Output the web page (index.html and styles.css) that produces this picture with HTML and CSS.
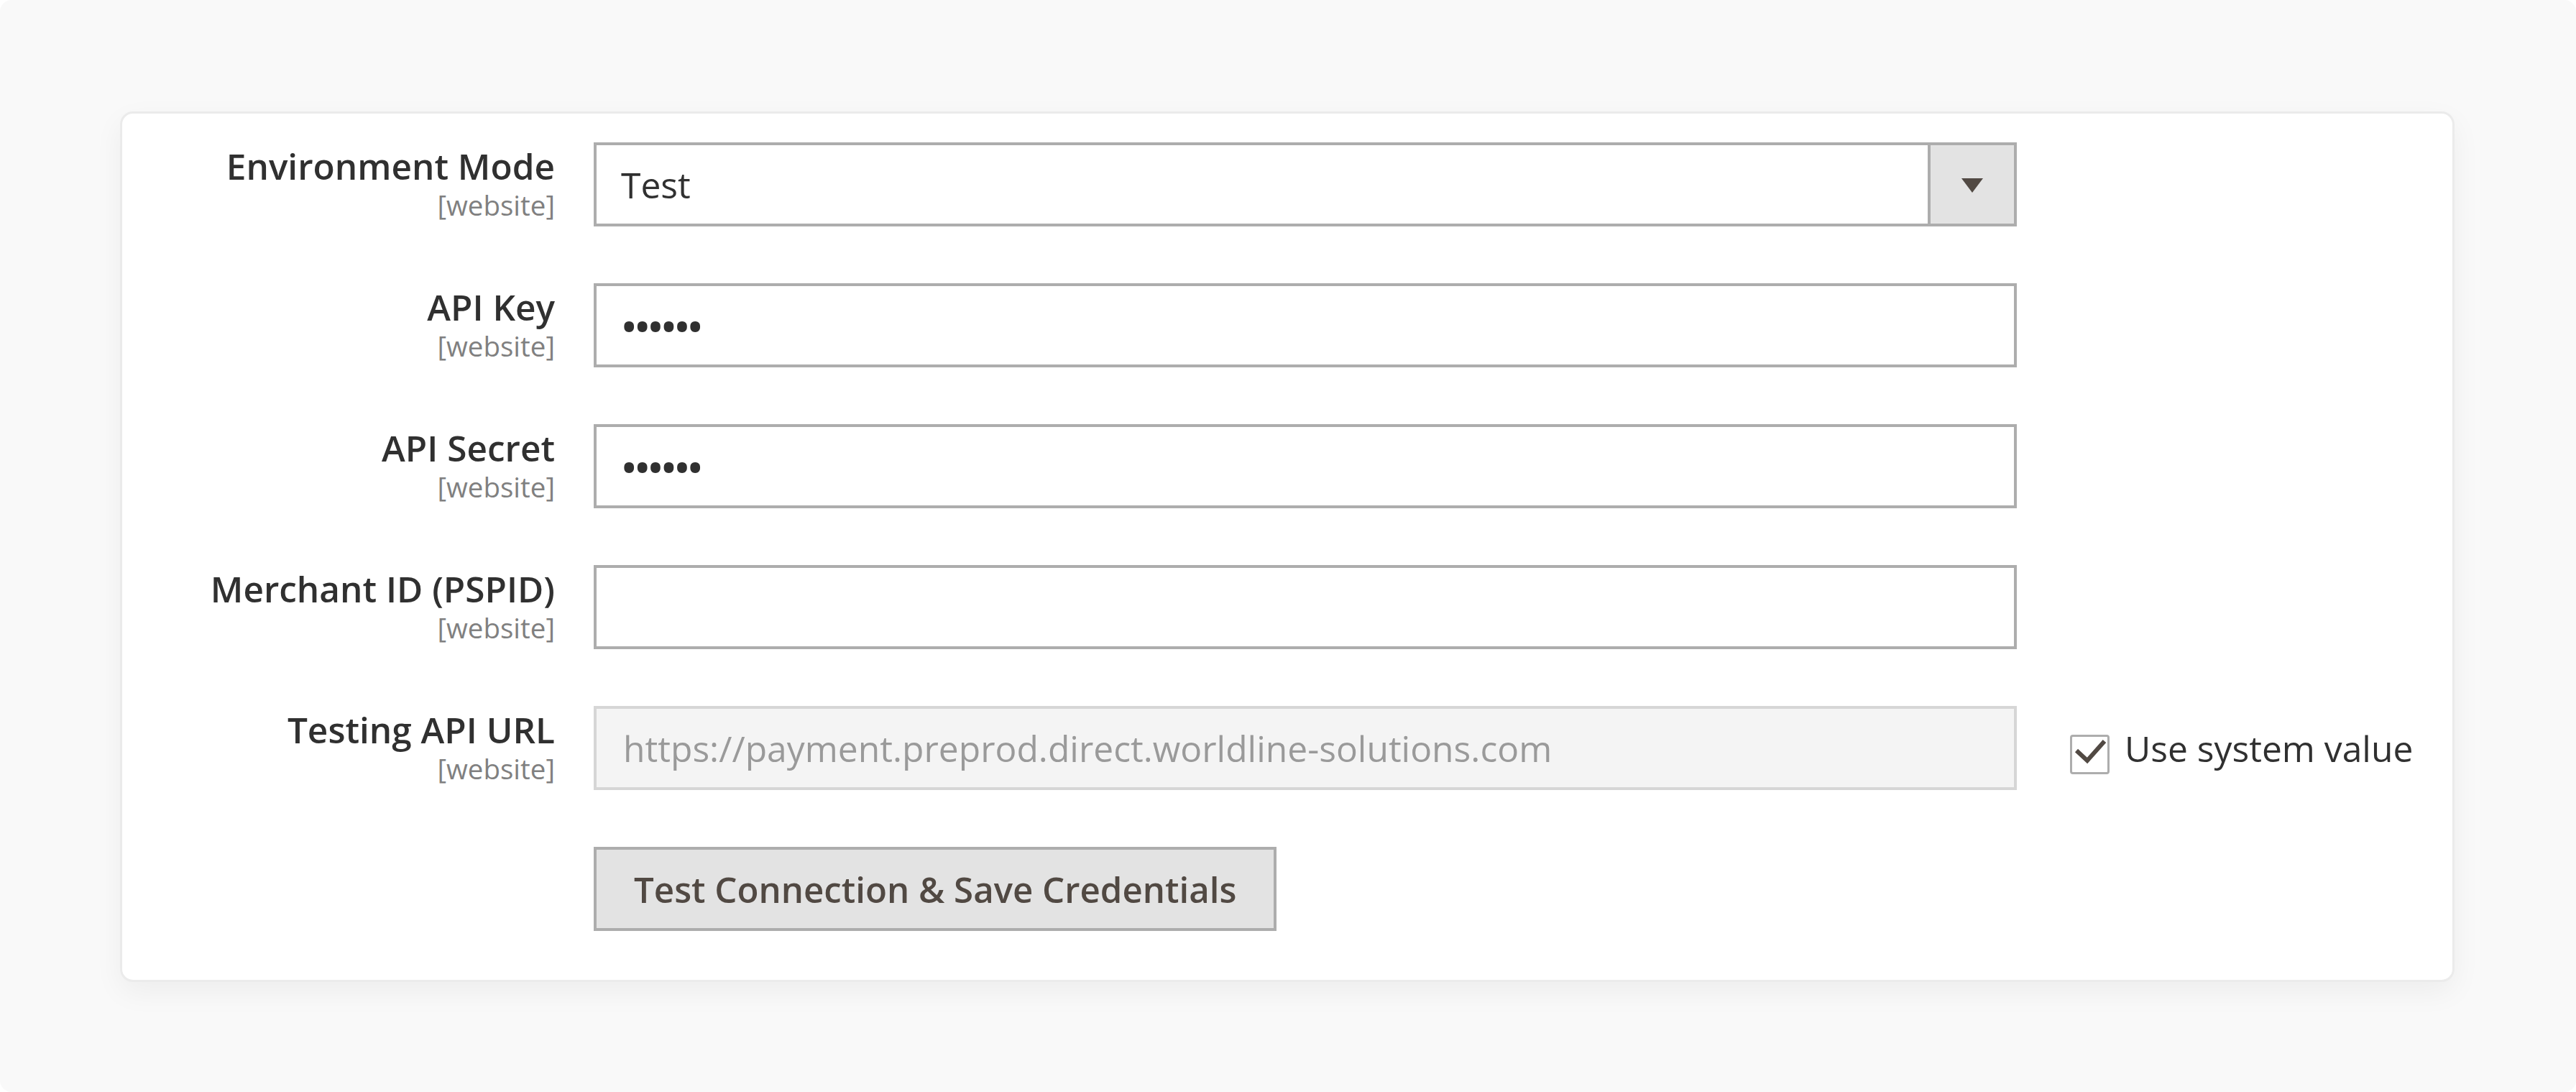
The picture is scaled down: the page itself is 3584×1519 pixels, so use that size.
FILE: index.html
```html
<!DOCTYPE html>
<html lang="en">
<head>
<meta charset="utf-8">
<title>Worldline configuration</title>
<link rel="stylesheet" href="styles.css">
</head>
<body>
<div class="page">
  <section class="card">
    <div class="row">
      <div class="label"><span class="label-text">Environment Mode</span><span class="scope">[website]</span></div>
      <div class="control">
        <div class="select">
          <span class="select-value">Test</span>
          <span class="select-arrow"><span class="triangle"></span></span>
        </div>
      </div>
      <div class="extra"></div>
    </div>

    <div class="row">
      <div class="label"><span class="label-text">API Key</span><span class="scope">[website]</span></div>
      <div class="control">
        <div class="input"><span class="dots">&#8226;&#8226;&#8226;&#8226;&#8226;&#8226;</span></div>
      </div>
      <div class="extra"></div>
    </div>

    <div class="row">
      <div class="label"><span class="label-text">API Secret</span><span class="scope">[website]</span></div>
      <div class="control">
        <div class="input"><span class="dots">&#8226;&#8226;&#8226;&#8226;&#8226;&#8226;</span></div>
      </div>
      <div class="extra"></div>
    </div>

    <div class="row">
      <div class="label"><span class="label-text">Merchant ID (PSPID)</span><span class="scope">[website]</span></div>
      <div class="control">
        <div class="input"></div>
      </div>
      <div class="extra"></div>
    </div>

    <div class="row">
      <div class="label"><span class="label-text">Testing API URL</span><span class="scope">[website]</span></div>
      <div class="control">
        <div class="input input-disabled">https://payment.preprod.direct.worldline-solutions.com</div>
      </div>
      <div class="extra">
        <label class="use-default">
          <span class="checkbox">
            <svg viewBox="0 0 48 48" width="48" height="48"><polyline points="5,19 20,33 44,6" fill="none" stroke="#514943" stroke-width="6"/></svg>
          </span>
          <span class="use-default-text">Use system value</span>
        </label>
      </div>
    </div>

    <div class="row">
      <div class="label"></div>
      <div class="control">
        <button class="action-button" type="button">Test Connection &amp; Save Credentials</button>
      </div>
      <div class="extra"></div>
    </div>
  </section>
</div>
</body>
</html>
```

FILE: styles.css
```css
* { box-sizing: border-box; }

html, body {
  margin: 0;
  padding: 0;
  background: #ffffff;
}

body {
  font-family: "Open Sans", "Liberation Sans", sans-serif;
  color: #303030;
}

.page {
  height: 1519px;
  background: #f9f9f9;
  border-radius: 16px;
  padding: 155px 169px 0 167px;
}

.card {
  background: #ffffff;
  border: 3px solid #ebebeb;
  border-radius: 18px;
  box-shadow: 0 14px 40px rgba(0, 0, 0, 0.05);
  padding: 40px 0 68px 0;
  display: flex;
  flex-direction: column;
  gap: 79px;
}

.row {
  display: grid;
  grid-template-columns: 602px 1980px 1fr;
  column-gap: 54px;
  height: 117px;
}

.label {
  display: flex;
  flex-direction: column;
  align-items: flex-end;
  padding-top: 4px;
  text-align: right;
}

.label-text {
  font-size: 49.5px;
  font-weight: 600;
  line-height: 1.2;
  color: #303030;
  white-space: nowrap;
}

.scope {
  font-size: 38.5px;
  line-height: 1.2;
  margin-top: 1px;
  color: #808080;
}

.control {
  display: flex;
}

.select,
.input {
  width: 100%;
  height: 117px;
  border: 4px solid #adadad;
  background: #ffffff;
  display: flex;
  align-items: center;
  font-size: 49.75px;
  color: #303030;
}

.select-value {
  flex: 1;
  padding-left: 34px;
}

.select-arrow {
  width: 120px;
  height: 100%;
  border-left: 4px solid #adadad;
  background: #e3e3e3;
  display: flex;
  align-items: center;
  justify-content: center;
}

.triangle {
  width: 0;
  height: 0;
  border-left: 15px solid transparent;
  border-right: 15px solid transparent;
  border-top: 20px solid #514943;
  margin-top: 2px;
}

.input {
  padding-left: 36px;
}

.dots {
  font-size: 49px;
  letter-spacing: 0;
  font-weight: 700;
  color: #303030;
}

.input-disabled {
  background: #f4f4f4;
  border-color: #d6d6d6;
  color: #9a9a9a;
  padding-left: 37px;
}

.extra {
  display: flex;
  align-items: center;
  padding-left: 20px;
}

.use-default {
  display: flex;
  align-items: center;
  gap: 21px;
  padding-top: 17px;
}

.checkbox {
  width: 55px;
  height: 55px;
  border: 3.5px solid #adadad;
  border-radius: 4px;
  background: #ffffff;
  display: flex;
  align-items: center;
  justify-content: center;
}

.checkbox svg {
  display: block;
}

.use-default-text {
  font-size: 49.75px;
  color: #303030;
  margin-top: -16px;
}

.action-button {
  height: 117px;
  padding: 0 52px;
  border: 4px solid #adadad;
  background: #e3e3e3;
  color: #514943;
  font-family: "Open Sans", "Liberation Sans", sans-serif;
  font-size: 49.2px;
  font-weight: 600;
  border-radius: 0;
  cursor: pointer;
}
```
